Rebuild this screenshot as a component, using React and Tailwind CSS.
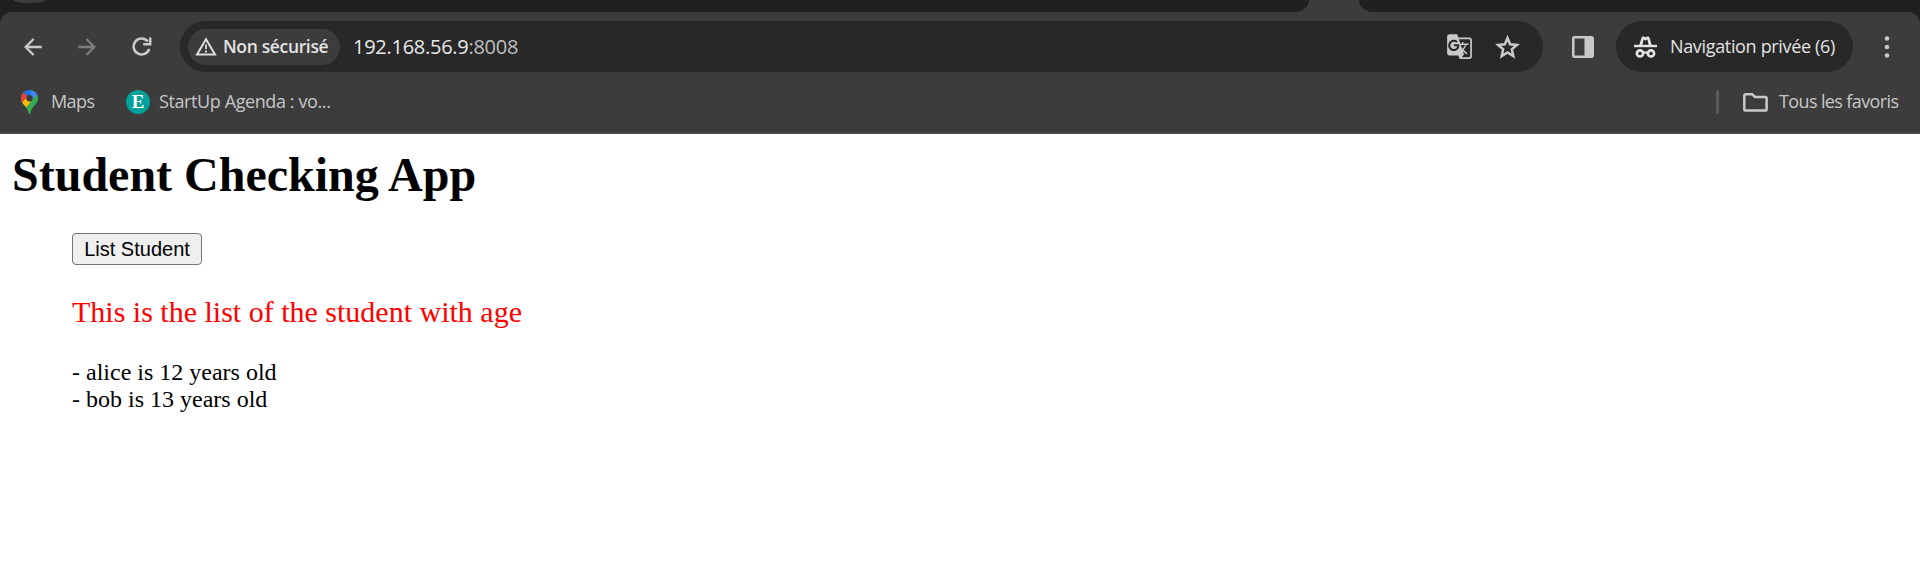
import { MdGTranslate } from "react-icons/md";

function BackIcon() {
  return (
    <svg width="18" height="18" viewBox="0 0 18 18" fill="none" stroke="#c9c9c9" strokeWidth="2.4">
      <path d="M17.8 9 H2 M9.6 1 L1.6 9 L9.6 17" />
    </svg>
  );
}

function ForwardIcon() {
  return (
    <svg width="18" height="18" viewBox="0 0 18 18" fill="none" stroke="#7c7c7c" strokeWidth="2.4">
      <path d="M0.2 9 H16 M8.4 1 L16.4 9 L8.4 17" />
    </svg>
  );
}

function ReloadIcon() {
  return (
    <svg width="20" height="19" viewBox="0 0 20 19" fill="none" stroke="#c9c9c9" strokeWidth="2.5">
      <path d="M15.8 4.4 A8 8 0 1 0 17.2 12" />
      <path d="M18.2 0.4 V7.2 H11.2" />
    </svg>
  );
}

function WarningIcon() {
  return (
    <svg width="22" height="19" viewBox="0 0 22 19" fill="none" stroke="#dedede" strokeWidth="2">
      <path d="M11 2.2 L20 17.6 H2 Z" />
      <path d="M11 7.5 v4.6 M11 13.6 v2" strokeWidth="1.8" />
    </svg>
  );
}

function StarIcon() {
  return (
    <svg width="25" height="24" viewBox="0 0 25 24" fill="none" stroke="#c9c9c9" strokeWidth="2.5">
      <path d="M12.5 3 L15.1 9.3 L21.9 9.9 L16.8 14.3 L18.3 21 L12.5 17.4 L6.7 21 L8.2 14.3 L3.1 9.9 L9.9 9.3 Z" />
    </svg>
  );
}

function SidePanelIcon() {
  return (
    <svg width="22" height="22" viewBox="0 0 22 22">
      <rect x="1.25" y="1.25" width="19.5" height="19.5" rx="1.5" fill="none" stroke="#c9c9c9" strokeWidth="2.5" />
      <rect x="12.5" y="1" width="8.5" height="20" fill="#c9c9c9" />
    </svg>
  );
}

function IncognitoIcon() {
  return (
    <svg width="23" height="22" viewBox="0 0 23 22" fill="none" stroke="#e3e3e3">
      <path d="M5 10 L7.4 1.9 Q8 0 9.8 0.6 L11.5 1.3 L13.2 0.6 Q15 0 15.6 1.9 L18 10 H14.9 L13.4 3.6 L11.5 4.4 L9.6 3.6 L8.1 10 Z" fill="#e3e3e3" stroke="none" />
      <path d="M0 10 H23" strokeWidth="2.4" />
      <circle cx="6" cy="17.4" r="3.1" strokeWidth="2.7" />
      <circle cx="17" cy="17.4" r="3.1" strokeWidth="2.7" />
      <path d="M9 17 Q11.5 15.8 14 17" strokeWidth="2.4" />
    </svg>
  );
}

function MapsIcon() {
  return (
    <svg width="17" height="24" viewBox="0 0 17 24">
      <defs>
        <clipPath id="pin">
          <path d="M8.5 0 C3.8 0 0 3.7 0 8.3 C0 14.5 6.3 15.5 7.7 23 Q8.5 25 9.3 23 C10.7 15.5 17 14.5 17 8.3 C17 3.7 13.2 0 8.5 0Z" />
        </clipPath>
      </defs>
      <g clipPath="url(#pin)">
        <rect width="17" height="24" fill="#34a853" />
        <path d="M0 13.5 L8.5 4 L12 10 L3.5 20 H0Z" fill="#fbbc04" />
        <path d="M0 0 H17 V4 L8.5 8.3 L2 2.7Z" fill="#1a73e8" />
        <path d="M11 0 L17 4 L9 12 L7 8Z" fill="#4285f4" />
        <path d="M17 3.5 L4.2 18.5 L6 24 H17Z" fill="#34a853" />
        <path d="M0 2.5 L2.2 2.6 L6.6 6.3 L0 14Z" fill="#ea4335" />
      </g>
      <circle cx="8.5" cy="8.3" r="3.2" fill="#3c3c3c" />
    </svg>
  );
}

function FolderIcon() {
  return (
    <svg width="25" height="19" viewBox="0 0 25 19" fill="none" stroke="#c9c9c9" strokeWidth="2.5">
      <path d="M2.7 1.3 H9.2 L12 4 H22.2 Q23.6 4 23.6 5.4 V16 Q23.6 17.6 22.2 17.6 H2.7 Q1.3 17.6 1.3 16 V2.7 Q1.3 1.3 2.7 1.3Z" />
    </svg>
  );
}

function TabStrip() {
  return (
    <div className="flex h-3 justify-between bg-[#3c3c3c]">
      <div className="flex w-[1309px] items-start rounded-br-[18px_15px] bg-[#1f2120] pl-[13px]">
        <div className="h-[3px] w-8 rounded-b-[14px_3px] bg-[#3c3c3c]" />
      </div>
      <div className="w-[561px] rounded-bl-[18px_15px] bg-[#1f2120]" />
    </div>
  );
}

function Toolbar() {
  return (
    <div className="flex h-[51px] items-center">
      <div className="flex w-[180px] shrink-0 items-center gap-9 pl-6">
        <BackIcon />
        <ForwardIcon />
        <ReloadIcon />
      </div>
      <div className="flex h-[51px] w-[1363px] shrink-0 items-center rounded-full bg-[#282828] pl-2">
        <div className="flex h-9 w-[152px] items-center rounded-full bg-[#3c3c3c] pl-[7px]">
          <WarningIcon />
          <span className="ml-1.5 text-[17.5px] font-semibold tracking-[-0.35px] whitespace-nowrap text-[#e3e3e3]">Non sécurisé</span>
        </div>
        <span className="ml-[13px] text-[20px] tracking-[-0.27px] text-[#e8e8e8]">
          192.168.56.9<span className="text-[#bfbfbf]">:8008</span>
        </span>
        <div className="ml-auto flex items-center gap-[22px] pr-[23px]">
          <MdGTranslate size={27} color="#c9c9c9" />
          <StarIcon />
        </div>
      </div>
      <div className="ml-[29px] shrink-0"><SidePanelIcon /></div>
      <div className="ml-[22px] flex h-[51px] w-[237px] shrink-0 items-center rounded-full bg-[#282828] pl-[18px]">
        <IncognitoIcon />
        <span className="ml-[13px] text-[18px] tracking-[-0.34px] whitespace-nowrap text-[#e3e3e3]">Navigation privée (6)</span>
      </div>
      <svg className="ml-[29px] shrink-0" width="10" height="24" viewBox="0 0 10 24" fill="#c9c9c9">
        <circle cx="5" cy="3.5" r="2.3" />
        <circle cx="5" cy="12" r="2.3" />
        <circle cx="5" cy="20.5" r="2.3" />
      </svg>
    </div>
  );
}

function Bookmarks() {
  return (
    <div className="flex h-[60px] items-center pl-[21px] text-[18px] text-[#c7c7c7]">
      <MapsIcon />
      <span className="mb-0.5 ml-[13px] w-[75px] tracking-[-0.6px]">Maps</span>
      <span className="flex size-6 items-center justify-center rounded-full bg-[#00a19a] font-['Liberation_Serif',serif] text-[19px] font-bold text-white">E</span>
      <span className="mb-0.5 ml-[9px] tracking-[-0.4px]">StartUp Agenda : vo...</span>
      <div className="ml-auto flex items-center pr-[21px]">
        <div className="mr-6 h-6 w-[3px] rounded-full bg-[#5c5c5c]" />
        <FolderIcon />
        <span className="mb-0.5 ml-[11px] w-[120px] tracking-[-0.62px] whitespace-nowrap">Tous les favoris</span>
      </div>
    </div>
  );
}

export default function App() {
  return (
    <div className="h-[572px] w-[1920px] overflow-hidden bg-white">
      <header className="bg-[#1f2120] font-['Open_Sans','Noto_Sans',sans-serif]">
        <TabStrip />
        <div className="h-[122px] rounded-t-[12px] border-b-2 border-[#484647] bg-[#3c3c3c] pt-[9px]">
          <Toolbar />
          <Bookmarks />
        </div>
      </header>
      <main className="px-3 pt-[13px] font-['Liberation_Serif',serif] text-black">
        <h1 className="text-[48px] leading-[56px] font-bold whitespace-nowrap">Student Checking App</h1>
        <div className="pt-[30px] pl-[60px]">
          <button className="block h-8 w-[130px] rounded-[4px] border border-[#767676] bg-[#efefef] font-['Liberation_Sans',sans-serif] text-[20px] leading-[30px] whitespace-nowrap">List Student</button>
          <p className="mt-[30px] text-[30px] leading-[34px] text-[#ff0000]">This is the list of the student with age</p>
          <p className="mt-[30px] text-[24px] leading-[27px]">
            - alice is 12 years old
            <br />- bob is 13 years old
          </p>
        </div>
      </main>
    </div>
  );
}
